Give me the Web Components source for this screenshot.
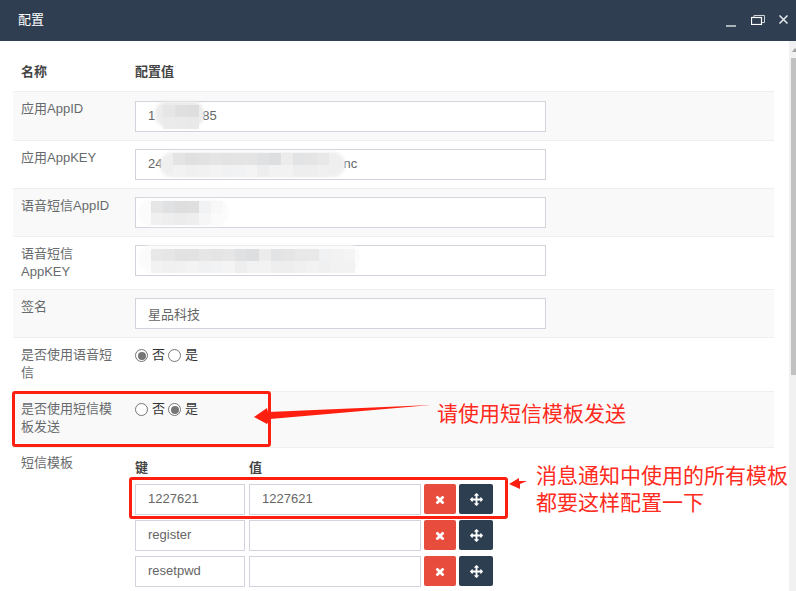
<!DOCTYPE html>
<html lang="zh">
<head>
<meta charset="utf-8">
<title>配置</title>
<style>
  html, body { margin: 0; height: 100%; overflow: hidden; background: #fff; }
  body { font: 13px/18px "Liberation Sans", "Noto Sans CJK SC", sans-serif; color: #676a6c; }
</style>
</head>
<body>
<cfg-dialog heading="配置">
  <cfg-table>
    <cfg-row head label="名称">配置值</cfg-row>

    <cfg-row first striped label="应用AppID">
      <cfg-input>1<blur-patch blob="#ececec" style="left:19px;top:-1px;width:49px;height:26px" cols="3" start="8" rowtop="4" cells="e6e6e6,e0e0e0,dedede,ebebeb,eaeaea,e9e9e9"></blur-patch><span style="margin-left:47px">85</span></cfg-input>
    </cfg-row>
    <cfg-row label="应用AppKEY">
      <cfg-input>24<blur-patch blob="#efefef" style="left:24px;top:2px;width:185px;height:25px" cols="13" start="13" rowtop="1" cells="e4e4e4,e0e0e0,e2e2e2,e5e5e5,e3e3e3,e4e4e4,e4e4e4,dfe1e3,dcdee0,ececec,e2e3e4,e5e5e5,e8e8e8,f2f2f2,f0f0f0,f1f1f1,f3f3f3,eff1f2,f1f2f3,f4f4f4,eeeeee,f2f2f2,f2f2f2,eeeeee,eeeeee,f0f0f0"></blur-patch><span style="margin-left:181px">nc</span></cfg-input>
    </cfg-row>
    <cfg-row striped label="语音短信AppID">
      <cfg-input><blur-patch style="left:3px;top:1px;width:89px;height:27px" cols="6" start="12" rowtop="2" cells="e6e6e6,dfe1e2,dedede,dfdfdf,f1f2f3,f8f8f8,f0f0f0,eeeeee,ececec,eeeeee,f6f6f6,fbfbfb"></blur-patch></cfg-input>
    </cfg-row>
    <cfg-row label="语音短信AppKEY">
      <cfg-input><blur-patch style="left:3px;top:-1px;width:221px;height:27px" cols="17" start="12" rowtop="4" cells="e8e8e8,e6e6e6,e2e2e2,e2e2e2,e6e6e6,e4e4e4,e6e6e6,dfe1e3,dcdee0,ececec,e2e3e4,e5e5e5,e8e8e8,e8e8e8,eff1f2,f2f2f2,f4f4f4,f2f2f2,f0f0f0,f1f1f1,f3f3f3,eff1f2,f1f2f3,f4f4f4,eeeeee,f2f2f2,f2f2f2,eeeeee,eeeeee,f0f0f0,f2f2f2,f0f0f0,f2f2f2,f2f2f2"></blur-patch></cfg-input>
    </cfg-row>
    <cfg-row striped label="签名"><cfg-input cjk>星品科技</cfg-input></cfg-row>
    <cfg-row label="是否使用语音短信" style="padding-bottom:9px">
      <cfg-radio checked>否</cfg-radio><cfg-radio>是</cfg-radio>
    </cfg-row>
    <cfg-row striped label="是否使用短信模板发送" style="padding-bottom:11px">
      <cfg-radio>否</cfg-radio><cfg-radio checked>是</cfg-radio>
    </cfg-row>
    <cfg-row tight label="短信模板">
      <kv-table>
        <kv-row key="1227621" val="1227621"></kv-row>
        <kv-row key="register" val=""></kv-row>
        <kv-row key="resetpwd" val=""></kv-row>
      </kv-table>
    </cfg-row>
  </cfg-table>

  <!-- hand drawn notes on top of the screenshot -->
  <anno-box style="left:12px;top:391px;width:259px;height:56px"></anno-box>
  <anno-box style="left:129px;top:477px;width:379px;height:42px"></anno-box>
  <anno-arrows></anno-arrows>
  <anno-text style="left:437px;top:400px">请使用短信模板发送</anno-text>
  <anno-text style="left:536px;top:462px">消息通知中使用的所有模板<br>都要这样配置一下</anno-text>
</cfg-dialog>

<script>
class CfgDialog extends HTMLElement {
  constructor() {
    super();
    this.attachShadow({ mode: 'open' }).innerHTML = `
    <style>
      :host { display: flex; flex-direction: column; width: 796px; height: 591px; position: relative; overflow: hidden; }
      .bar {
        flex: none; height: 41px; background: #2f3e50; color: #fff;
        display: flex; align-items: center; padding-left: 18px; gap: 0;
      }
      .bar .title { flex: 1; margin-top: -1px; }
      .bar svg { display: block; }
      .tools { display: flex; align-items: center; margin-right: 8px; margin-top: -2px; }
      .main { flex: 1; display: flex; min-height: 0; }
      .content { flex: 1; min-width: 0; overflow: hidden; padding: 13px 0 0 13px; }
      .scroll { flex: none; width: 7px; background: #f1f1f1; padding-top: 17px; box-sizing: border-box; position: relative; }
      .scroll::before {
        content: ""; position: absolute; left: 3px; top: 7px;
        border: 3px solid transparent; border-top: 0; border-bottom: 4px solid #a3a3a3;
      }
      .thumb { margin-left: 2px; height: 317px; background: #c1c1c1; }
    </style>
    <div class="bar">
      <span class="title"></span>
      <div class="tools">
        <svg width="11" height="2" viewBox="0 0 11 2" style="margin-top:12px"><rect width="10" height="1.2" y=".4" fill="#fff"/></svg>
        <svg width="14" height="10" viewBox="0 0 14 10" fill="none" stroke="#fff" style="margin-left:14px"><path d="M3 2.5V.5h10.5v7H11" stroke="#cfd4da"/><rect x=".5" y="2.5" width="10" height="7" stroke-width="1.2"/></svg>
        <svg width="9" height="9" viewBox="0 0 9 9" fill="none" stroke="#e8ebee" stroke-width="1.5" style="margin-left:14px"><path d="M.5.5l8 8M8.5.5l-8 8"/></svg>
      </div>
    </div>
    <div class="main">
      <div class="content"><slot></slot></div>
      <div class="scroll"><div class="thumb"></div></div>
    </div>`;
    this.shadowRoot.querySelector('.title').textContent = this.getAttribute('heading');
  }
}
customElements.define('cfg-dialog', CfgDialog);

class CfgTable extends HTMLElement {
  constructor() {
    super();
    this.attachShadow({ mode: 'open' }).innerHTML = `
    <style>:host { display: block; width: 761px; }</style>
    <slot></slot>`;
  }
}
customElements.define('cfg-table', CfgTable);

class CfgRow extends HTMLElement {
  constructor() {
    super();
    this.attachShadow({ mode: 'open' }).innerHTML = `
    <style>
      :host { display: grid; grid-template-columns: 122px 1fr; border-top: 1px solid #efefef; padding-bottom: 8px; }
      :host([striped]) { background: #f9f9f9; }
      :host([head]) { border-top: 0; border-bottom: 1px solid #efefef; padding: 9px 0 10px; font-weight: bold; color: #444; }
      :host([first]) { border-top: 0; padding-top: 1px; }
      .label { padding: 8px 22px 0 8px; }
      :host([first]) .label { padding-top: 7px; }
      :host([tight]) .label { padding-top: 6px; }
      :host([head]) .label { padding-top: 0; }
      .value { padding-top: 8px; }
      :host([head]) .value { padding-top: 0; }
    </style>
    <div class="label"></div>
    <div class="value"><slot></slot></div>`;
    this.shadowRoot.querySelector('.label').textContent = this.getAttribute('label');
  }
}
customElements.define('cfg-row', CfgRow);

class CfgInput extends HTMLElement {
  constructor() {
    super();
    this.attachShadow({ mode: 'open' }).innerHTML = `
    <style>
      :host {
        display: block; width: 411px; height: 31px; box-sizing: border-box;
        border: 1px solid #d2d3dc; background: #fff; color: #666;
        padding: 0 12px; line-height: 27px; position: relative;
      }
      :host([cjk]) { line-height: 31px; }
      :host([compact]) { width: 100%; }
    </style>
    <slot></slot>`;
  }
}
customElements.define('cfg-input', CfgInput);

// smudge that hides a secret value in the screenshot
class BlurPatch extends HTMLElement {
  constructor() {
    super();
    this.attachShadow({ mode: 'open' }).innerHTML = `
    <style>
      :host { display: block; position: absolute; }
      .blob { position: absolute; inset: 0; background: #fbfbfb; border-radius: 12px; filter: blur(1.5px); }
      .cells { position: absolute; display: grid; grid-auto-rows: 12px; }
    </style>
    <div class="blob"></div>
    <div class="cells"></div>`;
  }
  connectedCallback() {
    const wrap = this.shadowRoot.querySelector('.cells');
    const blob = this.getAttribute('blob');
    if (blob) this.shadowRoot.querySelector('.blob').style.background = blob;
    wrap.style.left = this.getAttribute('start') + 'px';
    wrap.style.top = this.getAttribute('rowtop') + 'px';
    wrap.style.gridTemplateColumns = `repeat(${this.getAttribute('cols')}, 12px)`;
    this.getAttribute('cells').split(',').forEach(c => {
      const d = document.createElement('div');
      d.style.background = '#' + c;
      wrap.appendChild(d);
    });
  }
}
customElements.define('blur-patch', BlurPatch);

class CfgRadio extends HTMLElement {
  constructor() {
    super();
    this.attachShadow({ mode: 'open' }).innerHTML = `
    <style>
      :host { display: inline-flex; align-items: flex-start; color: #333; margin-right: 3px; height: 18px; }
      .dot {
        width: 13px; height: 13px; box-sizing: border-box; border-radius: 50%;
        border: 1px solid #767676; background: #fff; margin: 3px 4px 0 0; position: relative;
      }
      :host([checked]) .dot::after {
        content: ""; position: absolute; inset: 1.5px; border-radius: 50%; background: #767676;
      }
    </style>
    <span class="dot"></span><slot></slot>`;
  }
}
customElements.define('cfg-radio', CfgRadio);

class KvTable extends HTMLElement {
  constructor() {
    super();
    this.attachShadow({ mode: 'open' }).innerHTML = `
    <style>
      :host { display: block; }
      .head { display: grid; grid-template-columns: 114px 172px; font-weight: bold; color: #444; height: 25px; padding-top: 3px; }
      .rows { display: grid; gap: 5px; }
    </style>
    <div class="head"><span>键</span><span>值</span></div>
    <div class="rows"><slot></slot></div>`;
  }
}
customElements.define('kv-table', KvTable);

class KvRow extends HTMLElement {
  constructor() {
    super();
    this.attachShadow({ mode: 'open' }).innerHTML = `
    <style>
      :host { display: grid; grid-template-columns: 110px 173px 32px 34px; column-gap: 3px; }
      .v { margin-left: 1px; }
      button {
        height: 30px; border: 0; border-radius: 2px; padding: 0; color: #fff;
        display: flex; align-items: center; justify-content: center;
      }
      .del { background: #e74c3c; }
      .move { background: #2c3e50; }
      svg { display: block; fill: currentColor; }
    </style>
    <cfg-input compact class="k"></cfg-input>
    <div class="v"><cfg-input compact class="val"></cfg-input></div>
    <button class="del"><svg width="10" height="10" viewBox="0 0 1408 1408"><path d="M1298 1202q0 40-28 68l-136 136q-28 28-68 28t-68-28l-294-294-294 294q-28 28-68 28t-68-28l-136-136q-28-28-28-68t28-68l294-294-294-294q-28-28-28-68t28-68l136-136q28-28 68-28t68 28l294 294 294-294q28-28 68-28t68 28l136 136q28 28 28 68t-28 68l-294 294 294 294q28 28 28 68z"/></svg></button>
    <button class="move"><svg width="13" height="13" viewBox="0 0 1792 1792"><path d="M1792 896q0 26-19 45l-256 256q-19 19-45 19t-45-19-19-45v-128h-384v384h128q26 0 45 19t19 45-19 45l-256 256q-19 19-45 19t-45-19l-256-256q-19-19-19-45t19-45 45-19h128v-384h-384v128q0 26-19 45t-45 19-45-19l-256-256q-19-19-19-45t19-45l256-256q19-19 45-19t45 19 19 45v128h384v-384h-128q-26 0-45-19t-19-45 19-45l256-256q19-19 45-19t45 19l256 256q19 19 19 45t-19 45-45 19h-128v384h384v-128q0-26 19-45t45-19 45 19l256 256q19 19 19 45z"/></svg></button>`;
    this.shadowRoot.querySelector('.k').textContent = this.getAttribute('key');
    this.shadowRoot.querySelector('.val').textContent = this.getAttribute('val');
  }
}
customElements.define('kv-row', KvRow);

class AnnoBox extends HTMLElement {
  constructor() {
    super();
    this.attachShadow({ mode: 'open' }).innerHTML = `
    <style>
      :host { display: block; position: absolute; box-sizing: border-box; border: 3px solid #ff1f10; border-radius: 3px; }
    </style>`;
  }
}
customElements.define('anno-box', AnnoBox);

class AnnoArrows extends HTMLElement {
  constructor() {
    super();
    this.attachShadow({ mode: 'open' }).innerHTML = `
    <style>
      :host { display: block; position: absolute; left: 0; top: 0; }
      svg { display: block; }
    </style>
    <svg width="796" height="591" fill="#ff1f10">
      <polygon points="254,417 267,408 268,412 431,405 270,419 267,424"/>
      <polygon points="509,484 519,478 519,481 527,481 520,484 520,489"/>
    </svg>`;
  }
}
customElements.define('anno-arrows', AnnoArrows);

class AnnoText extends HTMLElement {
  constructor() {
    super();
    this.attachShadow({ mode: 'open' }).innerHTML = `
    <style>
      :host { display: block; position: absolute; color: #ff2a20; font-size: 21px; line-height: 27px; white-space: nowrap; }
    </style>
    <slot></slot>`;
  }
}
customElements.define('anno-text', AnnoText);
</script>
</body>
</html>
